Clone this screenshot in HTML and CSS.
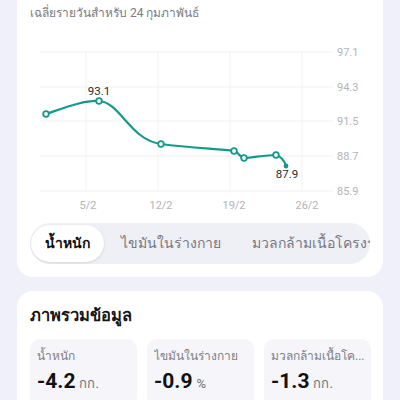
FILE: index.html
```html
<!DOCTYPE html>
<html lang="th">
<head>
<meta charset="utf-8">
<link rel="stylesheet" href="styles.css">
</head>
<body>
<div class="page">
  <section class="card chart-card">
    <div class="subtitle">เฉลี่ยรายวันสำหรับ 24 กุมภาพันธ์</div>
    <svg class="chart" width="340" height="180" viewBox="30 32 340 180" xmlns="http://www.w3.org/2000/svg">
      <defs>
        <linearGradient id="cur" x1="0" y1="0" x2="0" y2="1">
          <stop offset="0" stop-color="#7fc2cc" stop-opacity="0.2"/>
          <stop offset="0.3" stop-color="#6fb8c4" stop-opacity="0.9"/>
          <stop offset="1" stop-color="#6fb8c4" stop-opacity="0.5"/>
        </linearGradient>
      </defs>
      <g class="grid">
        <line x1="40" y1="52" x2="333" y2="52"/>
        <line x1="40" y1="87" x2="333" y2="87"/>
        <line x1="40" y1="121" x2="333" y2="121"/>
        <line x1="40" y1="156" x2="333" y2="156"/>
        <line x1="40" y1="191" x2="333" y2="191"/>
        <line x1="86" y1="52" x2="86" y2="191"/>
        <line x1="158" y1="52" x2="158" y2="191"/>
        <line x1="230" y1="52" x2="230" y2="191"/>
        <line x1="302" y1="52" x2="302" y2="191"/>
      </g>
      <g class="ylabels">
        <text x="337" y="56">97.1</text>
        <text x="337" y="91">94.3</text>
        <text x="337" y="125">91.5</text>
        <text x="337" y="160">88.7</text>
        <text x="337" y="195">85.9</text>
      </g>
      <g class="xlabels">
        <text x="88" y="209">5/2</text>
        <text x="161" y="209">12/2</text>
        <text x="234" y="209">19/2</text>
        <text x="307" y="209">26/2</text>
      </g>
      <line class="cursor" x1="286.5" y1="52" x2="286.5" y2="212"/>
      <path class="series" d="M46,114 C64,108 84,100 99,101 C120,102 130,140 161,144 C190,148 220,149 234,151 C239,152 240,158 244,158 C256,157 266,155 276,155 C281,156 285,162 286,166"/>
      <g class="pts">
        <circle cx="46" cy="114" r="2.8"/>
        <circle cx="99" cy="101" r="2.8"/>
        <circle cx="161" cy="144" r="2.8"/>
        <circle cx="234" cy="151" r="2.8"/>
        <circle cx="244" cy="158" r="2.8"/>
        <circle cx="276" cy="155" r="2.8"/>
      </g>
      <circle class="end" cx="286" cy="166" r="2.4"/>
      <text class="val" x="99" y="95">93.1</text>
      <text class="val" x="287" y="178">87.9</text>
    </svg>
    <div class="tabs">
      <div class="tab active">น้ำหนัก</div>
      <div class="tab">ไขมันในร่างกาย</div>
      <div class="tab">มวลกล้ามเนื้อโครงร่าง</div>
    </div>
  </section>

  <section class="card summary-card">
    <h2 class="title">ภาพรวมข้อมูล</h2>
    <div class="stats">
      <div class="stat">
        <div class="label">น้ำหนัก</div>
        <div class="value">-4.2<span class="unit">กก.</span></div>
      </div>
      <div class="stat">
        <div class="label">ไขมันในร่างกาย</div>
        <div class="value">-0.9<span class="unit">%</span></div>
      </div>
      <div class="stat">
        <div class="label">มวลกล้ามเนื้อโค...</div>
        <div class="value">-1.3<span class="unit">กก.</span></div>
      </div>
    </div>
  </section>
</div>
</body>
</html>
```
FILE: styles.css
```css
* { box-sizing: border-box; }
html, body { margin: 0; padding: 0; }
body {
  background: #f0f0fa;
  font-family: Roboto, "Noto Sans", "DejaVu Sans", sans-serif;
  color: #1a1a1a;
  width: 400px;
  height: 400px;
  overflow: hidden;
}
.page {
  padding: 0 17px;
  display: flex;
  flex-direction: column;
  gap: 14px;
}
.card {
  background: #ffffff;
  border-radius: 16px;
}
.chart-card {
  border-radius: 0 0 16px 16px;
  padding: 5px 13px 13px 13px;
}
.subtitle {
  font-size: 12px;
  line-height: 16px;
  color: #7a7a80;
}
.chart {
  display: block;
  margin-top: 11px;
}
.grid line {
  stroke: #f1f1f3;
  stroke-width: 1;
}
.ylabels text {
  font-size: 11px;
  fill: #b3b3b8;
  font-family: Roboto, sans-serif;
}
.xlabels text {
  font-size: 11px;
  fill: #b3b3b8;
  text-anchor: middle;
  font-family: Roboto, sans-serif;
}
.cursor {
  stroke: url(#cur);
  stroke-width: 1;
}
.series {
  fill: none;
  stroke: #14998a;
  stroke-width: 2.2;
  stroke-linecap: round;
}
.pts circle {
  fill: #ffffff;
  stroke: #14998a;
  stroke-width: 1.8;
}
.end { fill: #14998a; }
.val {
  font-size: 11.5px;
  fill: #2a2a2a;
  text-anchor: middle;
  font-family: Roboto, sans-serif;
}
.tabs {
  margin-top: 11px;
  height: 41px;
  background: #efeff6;
  border-radius: 21px;
  padding: 2px 1px;
  display: flex;
  gap: 3px;
  overflow: hidden;
  white-space: nowrap;
}
.tab {
  flex: none;
  height: 37px;
  line-height: 37px;
  padding: 0 14px;
  font-size: 14px;
  color: #77777d;
  border-radius: 19px;
}
.tab.active {
  background: #ffffff;
  color: #111111;
  font-weight: 700;
  box-shadow: 0 1px 3px rgba(0,0,0,0.12);
}
.summary-card {
  padding: 13px 12px 12px 13px;
}
.title {
  margin: 0 0 11px 0;
  font-size: 16.5px;
  line-height: 24px;
  font-weight: 700;
  color: #151515;
}
.stats {
  display: grid;
  grid-template-columns: repeat(3, 1fr);
  gap: 10px;
}
.stat {
  background: #f5f5fa;
  border-radius: 10px;
  padding: 8px 7px 10px 7px;
  min-width: 0;
}
.label {
  font-size: 12px;
  line-height: 18px;
  color: #808086;
  white-space: nowrap;
  overflow: hidden;
}
.value {
  font-size: 21px;
  line-height: 26px;
  font-weight: 700;
  color: #111111;
  margin-top: 3px;
}
.unit {
  font-size: 13px;
  font-weight: 400;
  color: #6f6f75;
  margin-left: 4px;
}
```
